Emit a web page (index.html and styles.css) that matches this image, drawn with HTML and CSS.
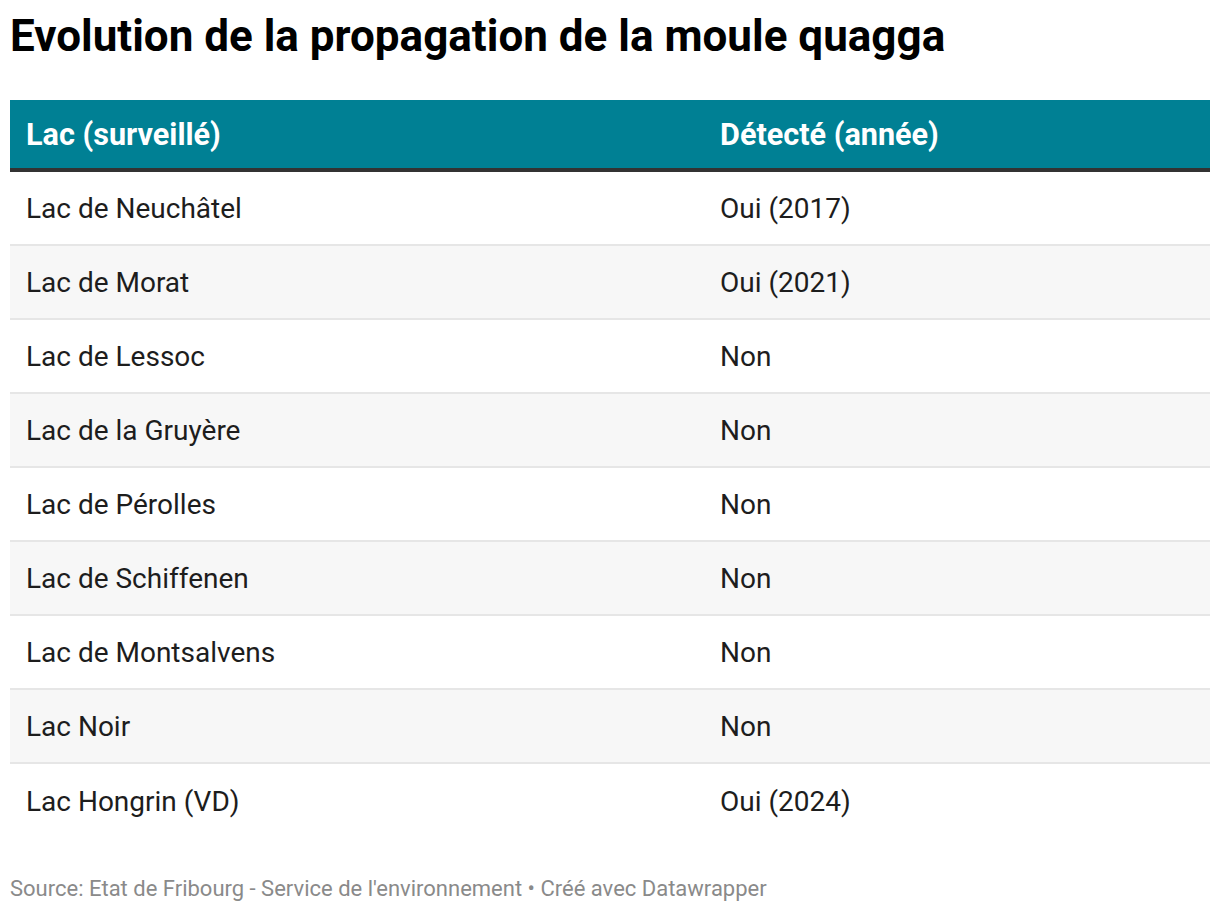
FILE: index.html
```html
<!DOCTYPE html>
<html lang="fr">
<head>
<meta charset="utf-8">
<title>Evolution de la propagation de la moule quagga</title>
<link rel="stylesheet" href="styles.css">
</head>
<body>
<div class="chart">
  <h1 class="title">Evolution de la propagation de la moule quagga</h1>
  <div class="table">
    <div class="row head">
      <div class="cell c1">Lac (surveillé)</div>
      <div class="cell c2">Détecté (année)</div>
    </div>
    <div class="row"><div class="cell c1">Lac de Neuchâtel</div><div class="cell c2">Oui (2017)</div></div>
    <div class="row alt"><div class="cell c1">Lac de Morat</div><div class="cell c2">Oui (2021)</div></div>
    <div class="row"><div class="cell c1">Lac de Lessoc</div><div class="cell c2">Non</div></div>
    <div class="row alt"><div class="cell c1">Lac de la Gruyère</div><div class="cell c2">Non</div></div>
    <div class="row"><div class="cell c1">Lac de Pérolles</div><div class="cell c2">Non</div></div>
    <div class="row alt"><div class="cell c1">Lac de Schiffenen</div><div class="cell c2">Non</div></div>
    <div class="row"><div class="cell c1">Lac de Montsalvens</div><div class="cell c2">Non</div></div>
    <div class="row alt"><div class="cell c1">Lac Noir</div><div class="cell c2">Non</div></div>
    <div class="row last"><div class="cell c1">Lac Hongrin (VD)</div><div class="cell c2">Oui (2024)</div></div>
  </div>
  <div class="footer">Source: Etat de Fribourg - Service de l'environnement • Créé avec Datawrapper</div>
</div>
</body>
</html>
```
FILE: styles.css
```css
html, body {
  margin: 0;
  padding: 0;
  background: #ffffff;
}
body {
  font-family: Roboto, "Liberation Sans", Arial, sans-serif;
  color: #1d1d1d;
}
.chart {
  padding: 0 10px;
}
.title {
  margin: 0;
  padding-top: 10px;
  height: 100px;
  box-sizing: border-box;
  font-size: 44px;
  line-height: 52px;
  font-weight: 700;
  color: #000000;
}
.table {
  display: flex;
  flex-direction: column;
}
.row {
  display: grid;
  grid-template-columns: 694px 1fr;
  height: 74px;
  box-sizing: border-box;
  border-bottom: 2px solid #e6e6e6;
  align-items: center;
  font-size: 28px;
}
.row.alt {
  background: #f7f7f7;
}
.row.last {
  border-bottom: none;
}
.row.head {
  height: 72px;
  background: #008094;
  border-bottom: 4px solid #333333;
  color: #ffffff;
  font-weight: 700;
  font-size: 30.6px;
}
.cell {
  padding-left: 16px;
}
.c2 {
  padding-left: 16px;
}
.footer {
  margin-top: 38px;
  font-size: 22px;
  line-height: 26px;
  color: #8a8a8a;
}
```
